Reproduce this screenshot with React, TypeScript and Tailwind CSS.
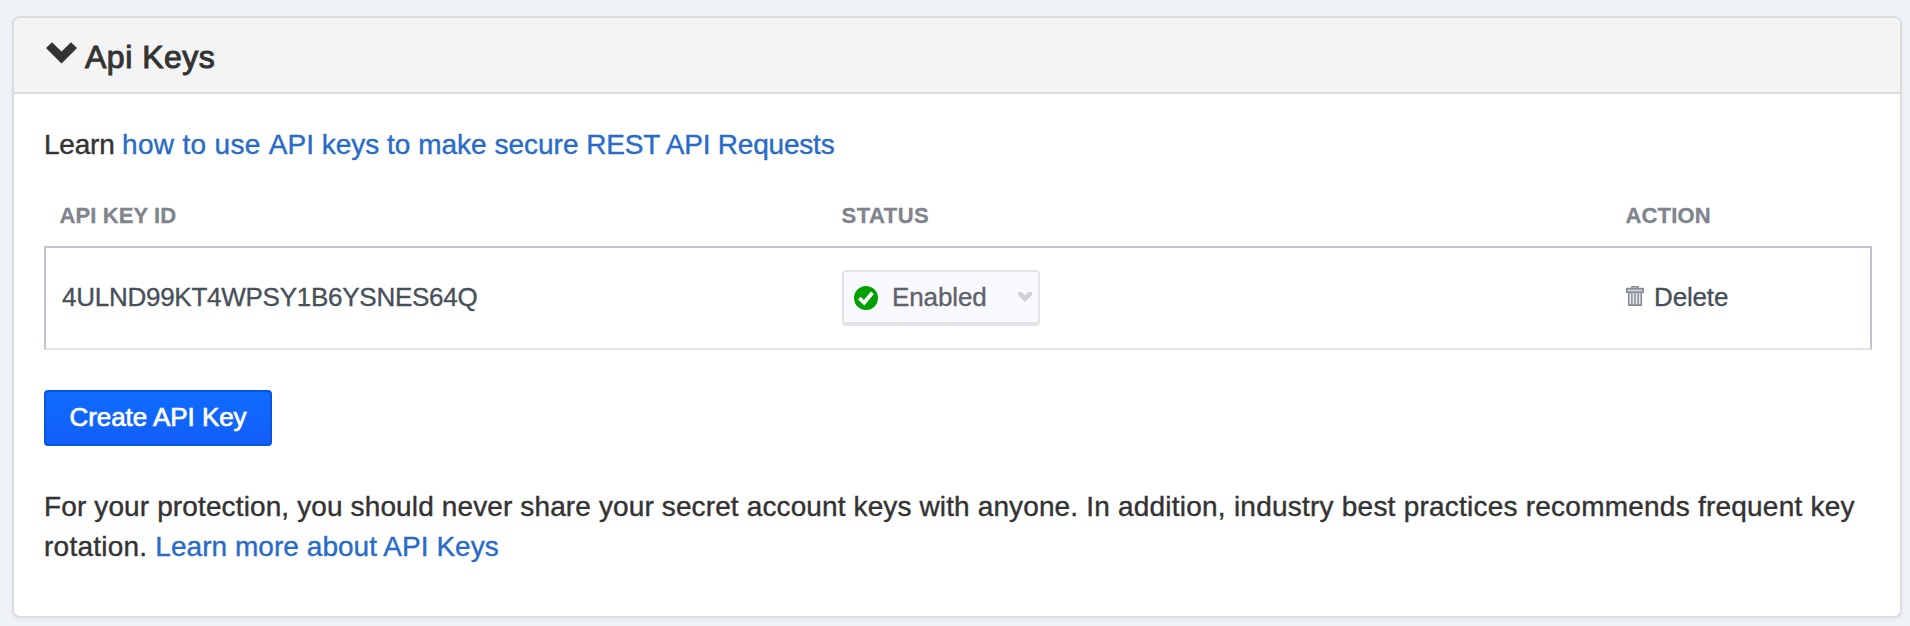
import React from "react";

function Chevron({ className }: { className: string }) {
  return (
    <svg viewBox="0 0 31 22" preserveAspectRatio="none" className={className} fill="currentColor" aria-hidden="true">
      <path d="M0 6 6 .3 15.5 9.6 25 .3 31 6 15.5 21.6Z" />
    </svg>
  );
}

function SmallChevron() {
  return (
    <svg viewBox="0 0 14 10" className="ml-8 h-[10px] w-[14px] text-[#ced0d4]" fill="currentColor" aria-hidden="true">
      <path d="M0 0H3.4L7 3.6 10.6 0H14V3L7 10 0 3Z" />
    </svg>
  );
}

function CheckBadge() {
  return (
    <svg viewBox="0 0 24 24" className="mt-0.5 size-6 shrink-0" aria-hidden="true">
      <circle cx="12" cy="12" r="12" fill="#00a000" />
      <path d="M5.4 12.2 10.2 16.8 18.4 6.8" fill="none" stroke="#fff" strokeWidth="3.8" />
    </svg>
  );
}

function TrashIcon() {
  return (
    <svg viewBox="0 0 18 20" className="-mt-[3px] h-5 w-[18px] shrink-0" fill="none" stroke="#858c94" aria-hidden="true">
      <path d="M6 2V.8h6V2" strokeWidth="1.6" />
      <path d="M.8 2.6h16.4v3.6H.8z" fill="#c8ccd0" strokeWidth="1.6" />
      <path d="M2.7 7v12.1h12.6V7" fill="#e4e6e9" strokeWidth="1.6" />
      <path d="M5.9 7v12M9 7v12M12.1 7v12" strokeWidth="1.4" />
    </svg>
  );
}

export default function App() {
  return (
    <div className="h-[626px] w-[1910px] overflow-hidden bg-[#eff3f8] pt-4 pl-3 font-['Liberation_Sans',Arial,sans-serif] text-[#333]">
      <section className="h-[602px] w-[1890px] rounded-lg border-2 border-[#dbdcde] bg-white shadow-[0_2px_4px_rgba(0,0,0,0.05)]">
        <header className="flex h-[76px] items-start rounded-t-md border-b-2 border-[#dbdcde] bg-[#f4f4f4] pl-8">
          <Chevron className="mt-[24px] h-[22px] w-[31px] text-[#333]" />
          <h1 className="mt-[19px] ml-2 text-[32px] leading-[40px] tracking-[0.5px] whitespace-nowrap [-webkit-text-stroke:1px_currentColor]">Api Keys</h1>
        </header>
        <div className="pl-[30px]">
          <p className="pt-[31px] text-[28px] leading-[40px] whitespace-nowrap [-webkit-text-stroke:0.4px_currentColor]">
            <span className="tracking-[-0.22px]">Learn </span>
            <a className="text-[#286cc8]">
              <span className="tracking-[0.32px]">how to use </span>
              API keys to make secure <span className="tracking-[-0.2px]">REST API Requests</span>
            </a>
          </p>
          <div className="mt-[31px] grid w-[1828px] grid-cols-[782px_784px_1fr] pl-[15.5px] text-[22px] leading-[40px] font-bold text-[#7f848d] [-webkit-text-stroke:0.3px_currentColor]">
            <span className="tracking-[0.1px]">API KEY ID</span>
            <span className="tracking-[0.5px]">STATUS</span>
            <span className="tracking-[0.15px]">ACTION</span>
          </div>
          <div className="mt-[10px] grid h-[104px] w-[1828px] grid-cols-[780px_784px_1fr] items-center border-2 border-[#c1c5d2] border-b-[#e2e3e9] pl-4 text-[26px] text-[#475059] [-webkit-text-stroke:0.35px_currentColor]">
            <span className="mb-0.5 tracking-[-0.26px]">4ULND99KT4WPSY1B6YSNES64Q</span>
            <div className="flex h-14 w-[198px] items-center rounded-[4px] border-2 border-b-4 border-[#e1e3e7] bg-[#f8f9fd] pl-[10px] text-[#5e626b]">
              <CheckBadge />
              <span className="ml-[14px] w-[94px] tracking-[-0.1px]">Enabled</span>
              <SmallChevron />
            </div>
            <div className="mb-0.5 flex items-center">
              <TrashIcon />
              <span className="ml-[10px] tracking-[-0.15px]">Delete</span>
            </div>
          </div>
          <button className="mt-10 flex h-14 w-[228px] items-center justify-center rounded-[4px] border-2 border-[#0755e2] bg-linear-to-b from-[#0f6cff] to-[#135ef8] pb-0.5 text-[26px] tracking-[-0.05px] whitespace-nowrap text-white [-webkit-text-stroke:0.7px_currentColor]">
            Create API Key
          </button>
          <p className="mt-[41px] text-[28px] leading-[40px] whitespace-nowrap [-webkit-text-stroke:0.4px_currentColor]">
            <span className="tracking-[0.125px]">For your protection, you should never share your secret account keys with anyone. </span>
            <span className="tracking-[0.23px]">In addition, industry best practices recommends frequent key</span>
            <br />
            <span className="tracking-[0.24px]">rotation. </span>
            <a className="tracking-[0.04px] text-[#286cc8]">Learn more about API Keys</a>
          </p>
        </div>
      </section>
    </div>
  );
}
